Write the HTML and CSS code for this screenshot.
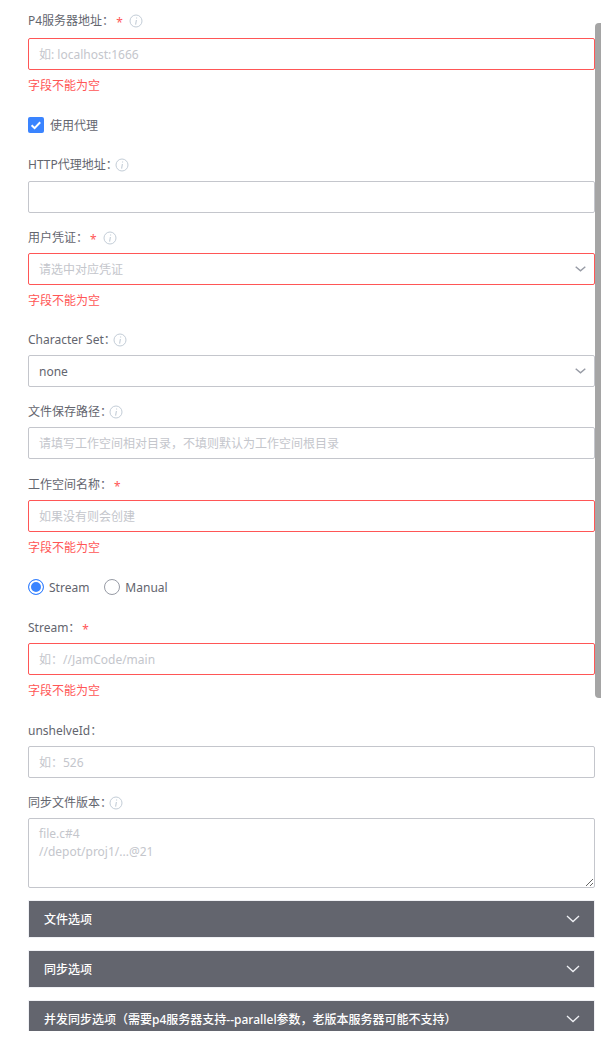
FILE: index.html
```html
<!DOCTYPE html>
<html lang="zh-CN">
<head>
    <meta charset="UTF-8">
    <meta name="viewport" content="width=device-width, initial-scale=1">
    <title>P4 配置</title>
    <link rel="stylesheet" href="styles.css">
</head>
<body>

<svg class="icon-defs" width="0" height="0">
    <symbol id="info" viewBox="0 0 14 14">
        <circle cx="7" cy="7" r="6" fill="none" stroke="currentColor" stroke-width="1"/>
        <path d="M7.6 3.4v1.1M7.4 6 6.6 10.6" fill="none" stroke="currentColor" stroke-width="1.1"/>
    </symbol>
    <symbol id="chevron" viewBox="0 0 14 8">
        <path d="M1 1l6 5.5L13 1" fill="none" stroke="currentColor" stroke-width="1.3"/>
    </symbol>
    <symbol id="chevron-small" viewBox="0 0 11 6">
        <path d="M.7.7l4.8 4.2L10.3.7" fill="none" stroke="currentColor" stroke-width="1.4"/>
    </symbol>
</svg>

<div class="page">
    <form class="form">
        <div class="field field-first has-error">
            <div class="label">P4服务器地址：<span class="required">*</span><svg class="info info-req"><use href="#info"/></svg></div>
            <input class="input" type="text" placeholder="如: localhost:1666">
            <div class="error">字段不能为空</div>
        </div>

        <label class="option-row">
            <span class="checkbox"><svg viewBox="0 0 16 16" width="16" height="16"><path d="M3.6 8.2l3 2.9 5.6-5.8" fill="none" stroke="#fff" stroke-width="2"/></svg></span>
            <span class="option-text">使用代理</span>
        </label>

        <div class="field field-high">
            <div class="label">HTTP代理地址：<svg class="info"><use href="#info"/></svg></div>
            <input class="input" type="text">
        </div>

        <div class="field has-error">
            <div class="label">用户凭证：<span class="required">*</span><svg class="info info-req"><use href="#info"/></svg></div>
            <div class="select">
                <span class="select-placeholder">请选中对应凭证</span>
                <svg class="select-arrow"><use href="#chevron-small"/></svg>
            </div>
            <div class="error">字段不能为空</div>
        </div>

        <div class="field">
            <div class="label">Character Set：<svg class="info"><use href="#info"/></svg></div>
            <div class="select">
                <span>none</span>
                <svg class="select-arrow"><use href="#chevron-small"/></svg>
            </div>
        </div>

        <div class="field">
            <div class="label">文件保存路径：<svg class="info"><use href="#info"/></svg></div>
            <input class="input" type="text" placeholder="请填写工作空间相对目录，不填则默认为工作空间根目录">
        </div>

        <div class="field field-wide has-error">
            <div class="label">工作空间名称：<span class="required">*</span></div>
            <input class="input" type="text" placeholder="如果没有则会创建">
            <div class="error">字段不能为空</div>
        </div>

        <div class="option-row">
            <label class="radio-item"><span class="radio radio-on"></span><span class="option-text">Stream</span></label>
            <label class="radio-item"><span class="radio"></span><span class="option-text">Manual</span></label>
        </div>

        <div class="field has-error">
            <div class="label">Stream：<span class="required">*</span></div>
            <input class="input" type="text" placeholder="如：//JamCode/main">
            <div class="error">字段不能为空</div>
        </div>

        <div class="field field-wide">
            <div class="label">unshelveId：</div>
            <input class="input" type="text" placeholder="如：526">
        </div>

        <div class="field">
            <div class="label">同步文件版本：<svg class="info"><use href="#info"/></svg></div>
            <textarea class="textarea" placeholder="file.c#4&#10;//depot/proj1/...@21"></textarea>
        </div>

        <div class="panel">文件选项<svg class="panel-arrow"><use href="#chevron"/></svg></div>
        <div class="panel">同步选项<svg class="panel-arrow"><use href="#chevron"/></svg></div>
        <div class="panel">并发同步选项（需要p4服务器支持--parallel参数，老版本服务器可能不支持）<svg class="panel-arrow"><use href="#chevron"/></svg></div>
    </form>
    <div class="scroll-thumb"></div>
</div>

</body>
</html>
```

FILE: styles.css
```css
* {
    box-sizing: border-box;
}

html, body {
    margin: 0;
    height: 100%;
    background-color: #fff;
    overflow: hidden;
}

body {
    font-family: "Noto Sans", "Noto Sans CJK SC", sans-serif;
    font-size: 12px;
    color: #63656e;
}

.icon-defs {
    position: absolute;
}

.page {
    position: relative;
    height: 1031px;
    overflow: hidden;
}

.form {
    padding: 0 6px 0 28px;
}

.scroll-thumb {
    position: absolute;
    top: 23px;
    right: 0;
    width: 6px;
    height: 675px;
    background-color: #a5a5a5;
    border-radius: 4px 0 0 4px;
}

.field {
    padding-top: 15px;
}

.field-first {
    padding-top: 11px;
}

.field-high {
    padding-top: 14px;
}

.field-wide {
    padding-top: 16px;
}

.label {
    display: flex;
    align-items: center;
    height: 20px;
    margin-bottom: 5px;
    line-height: 20px;
}

.field-first .label {
    margin-bottom: 7px;
}

.field-high .label {
    margin-bottom: 6px;
}

.required {
    margin: 3px 0 0 2px;
    color: #ff5656;
}

.info {
    width: 14px;
    height: 14px;
    margin-left: -3px;
    color: #c3cdd7;
}

.info-req {
    margin-left: 6px;
}

.input,
.select,
.textarea {
    display: block;
    width: 100%;
    border: 1px solid #c4c6cc;
    border-radius: 2px;
    background-color: #fff;
    font-family: inherit;
    font-size: 12px;
    color: #63656e;
    outline: none;
}

.input,
.select {
    height: 32px;
    padding: 0 10px;
}

.select {
    display: flex;
    align-items: center;
    justify-content: space-between;
}

.select-placeholder {
    color: #c4c6cc;
}

.select-arrow {
    width: 11px;
    height: 6px;
    margin-right: -2px;
    color: #979ba5;
}

.textarea {
    height: 70px;
    padding: 6px 10px;
    line-height: 18px;
    resize: vertical;
}

.input::placeholder,
.textarea::placeholder {
    color: #c4c6cc;
    opacity: 1;
}

.has-error .input,
.has-error .select {
    border-color: #ff5656;
}

.error {
    height: 30px;
    line-height: 32px;
    color: #ff5656;
}

.option-row {
    display: flex;
    align-items: center;
    height: 18px;
    margin-top: 16px;
    margin-bottom: 7px;
}

.checkbox {
    width: 16px;
    height: 16px;
    margin-right: 6px;
    border-radius: 2px;
    background-color: #3a84ff;
}

.checkbox svg {
    display: block;
}

.radio-item {
    display: flex;
    align-items: center;
    margin-right: 15px;
}

.radio {
    width: 16px;
    height: 16px;
    margin-right: 5px;
    border: 1px solid #979ba5;
    border-radius: 50%;
}

.radio-on {
    border-color: #3a84ff;
    background-color: #3a84ff;
    box-shadow: inset 0 0 0 2px #fff;
}

.panel {
    position: relative;
    height: 38px;
    margin-top: 12px;
    padding-left: 15px;
    border: 1px solid #f0f1f5;
    background-color: #63656e;
    line-height: 37px;
    font-weight: 500;
    color: #fff;
}

.panel-arrow {
    position: absolute;
    top: 14px;
    right: 14px;
    width: 14px;
    height: 8px;
    color: #f0f1f5;
}
```
